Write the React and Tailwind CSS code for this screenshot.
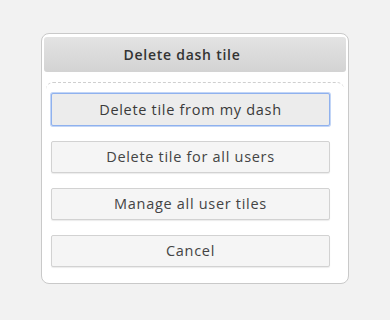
export default function App() {
    const buttons = [
        'Delete tile from my dash',
        'Delete tile for all users',
        'Manage all user tiles',
        'Cancel',
    ]

    return (
        <div className="h-[320px] w-full bg-[#f2f2f2] pt-[33px] font-['Open_Sans',sans-serif]">
            <div className="mx-auto w-[308px] rounded-[8px] border border-[#c9c9c9] bg-white p-[2px] pt-[3px] pb-[16px]">
                {/* header */}
                <div className="flex h-[35px] items-center justify-center rounded-[3px] bg-gradient-to-b from-[#e3e3e3] to-[#d3d3d3] pr-[26px] text-[14px] font-semibold tracking-[0.75px] text-[#333]">
                    Delete dash tile
                </div>

                {/* body */}
                <div className="mx-[2px] mt-[10px] rounded-t-[7px] border-t border-dashed border-[#cfcfcf] pl-[5px] pr-[14px] pt-[10px]">
                    <div className="flex flex-col gap-[15px]">
                        {buttons.map((label, i) => (
                            <button
                                key={label}
                                className={
                                    i === 0
                                        ? 'h-[33px] rounded-[2px] border border-[#8fb1ee] bg-[#ececec] text-[14.5px] tracking-[0.7px] text-[#3a3a3a] shadow-[0_0_0_1px_#c2d5f6]'
                                        : 'h-[32px] rounded-[2px] border border-[#d2d2d2] bg-[#f5f5f5] text-[14.5px] tracking-[0.7px] text-[#444] shadow-[0_1px_1px_rgba(0,0,0,0.08)]'
                                }
                            >
                                {label}
                            </button>
                        ))}
                    </div>
                </div>
            </div>
        </div>
    )
}
